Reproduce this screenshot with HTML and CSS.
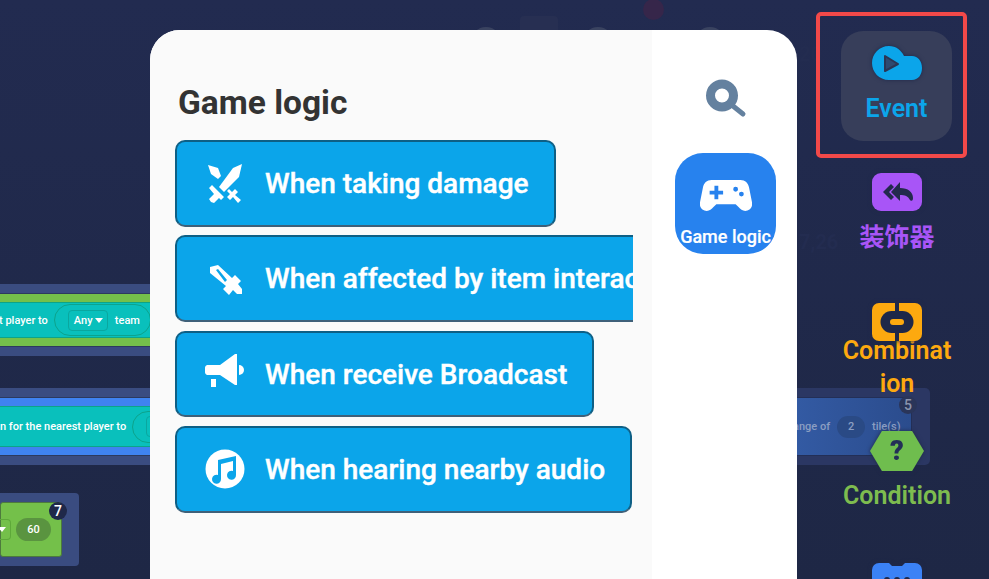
FILE: index.html
```html
<!DOCTYPE html>
<html lang="en">
<head>
  <meta charset="UTF-8">
  <title>Game logic blocks</title>
  <link rel="stylesheet" href="styles.css">
</head>
<body>
  <!-- Blocks on the canvas behind the panel -->
  <div class="canvas">
    <div class="stack stack-team">
      <div class="stack-band band-green">
        <div class="stack-row">
          <span>t player to</span>
          <span class="slot"><span class="select">Any <i class="caret"></i></span><span>team</span></span>
        </div>
      </div>
    </div>
    <div class="stack stack-nearest">
      <div class="stack-band band-blue">
        <div class="stack-row">
          <span>n for the nearest player to</span>
          <span class="slot"><span class="select"></span></span>
        </div>
      </div>
    </div>
    <div class="card card-seven">
      <div class="card-body">
        <span class="select mini"><i class="caret"></i></span>
        <span class="pill">60</span>
      </div>
      <span class="count">7</span>
    </div>
    <div class="card card-five">
      <div class="card-body">
        <span>ange of</span>
        <span class="pill">2</span>
        <span>tile(s)</span>
      </div>
      <span class="count">5</span>
    </div>
    <span class="top-tab tab-a"></span>
    <span class="top-tab tab-b"></span>
    <span class="top-tab tab-c"></span>
    <span class="top-square"></span>
    <span class="top-dot"></span>
    <span class="ghost ghost-top">20</span>
    <span class="ghost ghost-mid">7,26</span>
  </div>

  <!-- Block picker panel -->
  <section class="panel">
    <div class="panel-main">
      <h1>Game logic</h1>
      <div class="block-list">
        <button class="block">
          <svg class="block-icon" viewBox="0 0 40 40" fill="#fff">
            <path d="M3 2l10 3 3 8-3 3-7-5z"/>
            <path d="M37 1l-3 13-15 15-5-5L28 5z"/>
            <path d="M4 25l3-3 12 12-3 3-2-2-5 5-3-1-2-3 5-5z"/>
            <path d="M24 26l3 3 3-3 3 3-3 3 6 5-3 3-5-6-3 3-3-3 3-3-3-3z"/>
          </svg>
          <span>When taking damage</span>
        </button>
        <button class="block">
          <svg class="block-icon" viewBox="0 0 40 40" fill="#fff">
            <path fill-rule="evenodd" d="M5 8l8-2 14 13 3-3 6 6-3 3 4 5v5h-5l-4-4-4 5-6-6 3-3L5 14zM11 11l9 12 2-2-9-11z"/>
          </svg>
          <span>When affected by item interaction</span>
        </button>
        <button class="block">
          <svg class="block-icon" viewBox="0 0 40 40" fill="#fff">
            <path d="M2 11h13L30 0h2v31h-2L15 21H2a3 3 0 0 1-2-3v-4a3 3 0 0 1 2-3z"/>
            <path d="M34 11a5 5 0 0 1 0 10z"/>
            <path d="M6 25h5v8H6z"/>
          </svg>
          <span>When receive Broadcast</span>
        </button>
        <button class="block">
          <svg class="block-icon" viewBox="0 0 40 40">
            <circle cx="20" cy="20" r="19.500" fill="#fff"/>
            <path fill="#0ba5ea" d="M13 11l18-4v19a4.500 4.500 0 1 1-3-4V12l-12 3v15a4.500 4.500 0 1 1-3-4z"/>
          </svg>
          <span>When hearing nearby audio</span>
        </button>
      </div>
    </div>
    <aside class="panel-side">
      <svg class="search-icon" viewBox="0 0 42 42">
        <circle cx="17" cy="16.500" r="11.500" fill="none" stroke="#64819f" stroke-width="9"/>
        <path d="M28 27l10 8" stroke="#64819f" stroke-width="5" stroke-linecap="round"/>
      </svg>
      <div class="category">
        <svg class="pad-icon" viewBox="0 0 54 32" fill="#fff">
          <path fill-rule="evenodd" d="M12 0h30c5 0 8 3 9 8l3 15c1 6-3 9-7 9-3 0-5-2-7-4l-3-3H17l-3 3c-2 2-4 4-7 4-4 0-8-3-7-9L3 8c1-5 4-8 9-8zm3 6v5h-5v4h5v5h4v-5h5v-4h-5V6zm22 1a2.500 2.500 0 1 0 0 5 2.500 2.500 0 0 0 0-5zm6 5a2.500 2.500 0 1 0 0 5 2.500 2.500 0 0 0 0-5z"/>
        </svg>
        <span>Game logic</span>
      </div>
    </aside>
  </section>

  <!-- Toolbox rail -->
  <nav class="rail">
    <div class="rail-item rail-event">
      <div class="rail-active">
        <svg class="rail-icon" viewBox="0 0 50 34">
          <path fill="#0ba5ea" d="M17 0c7 0 12 4 15 10h8c6 0 10 5 10 12s-4 12-10 12H17C7 34 0 26 0 17S7 0 17 0z"/>
          <path fill="#2e4a70" stroke="#2b3554" stroke-width="2" stroke-linejoin="round" d="M13 10l13 8-13 7z"/>
        </svg>
        <span>Event</span>
      </div>
    </div>
    <div class="rail-item rail-decorator">
      <svg class="rail-icon rail-square" viewBox="0 0 50 38">
        <rect width="50" height="38" rx="9" fill="#a855f7"/>
        <path fill="#232a4d" d="M19 11l-8 8 8 8 3-3-5-5 5-5zM28 9l-9 10 9 9v-6c5 0 8 1 10 5 2 2 3 0 3-2 0-6-5-10-13-10z"/>
      </svg>
      <span>装饰器</span>
    </div>
    <div class="rail-item rail-combo">
      <svg class="rail-icon rail-square" viewBox="0 0 50 38">
        <rect width="50" height="38" rx="7" fill="#fda90f"/>
        <path fill="#1f2849" d="M23 0h4v9h-4zM23 29h4v9h-4z"/>
        <rect x="8.500" y="8" width="33" height="22" rx="11" fill="#1f2849"/>
        <rect x="18" y="16" width="14" height="6" rx="3" fill="#fda90f"/>
      </svg>
      <span>Combination</span>
    </div>
    <div class="rail-item rail-condition">
      <div class="hexagon-wrap"><div class="hexagon">?</div></div>
      <span>Condition</span>
    </div>
    <div class="rail-item rail-more">
      <svg class="rail-icon rail-square" viewBox="0 0 50 38">
        <path fill="#3b82f6" d="M7 0h10l3 3h10l3-3h10a7 7 0 0 1 7 7v31H0V7a7 7 0 0 1 7-7z"/>
        <circle cx="15" cy="17" r="3" fill="#1f2849"/>
        <circle cx="25" cy="17" r="3" fill="#1f2849"/>
        <circle cx="35" cy="17" r="3" fill="#1f2849"/>
      </svg>
    </div>
  </nav>
</body>
</html>
```

FILE: styles.css
```css
* {
  box-sizing: border-box;
}
html, body {
  height: 100%;
}
body {
  margin: 0;
  overflow: hidden;
  background: linear-gradient(180deg, #222b50, #1e2745);
  font-family: Roboto, "Noto Sans CJK SC", sans-serif;
  position: relative;
}

/* Canvas blocks */
.canvas {
  position: absolute;
  inset: 0;
}
.stack {
  position: absolute;
  left: 0;
  width: 160px;
  padding: 9px 0;
  background-color: #3a4c80;
}
.stack-team {
  top: 284px;
  height: 72px;
}
.stack-nearest {
  top: 388px;
  height: 77px;
}
.stack-band {
  padding: 8px 0;
  border-top: 1px solid #2c3a5e;
  border-bottom: 1px solid #2c3a5e;
}
.band-green {
  height: 54px;
  background-color: #74c04a;
}
.band-blue {
  height: 59px;
  background-color: #3f83f0;
}
.stack-row {
  height: 100%;
  display: flex;
  align-items: center;
  gap: 6px;
  background-color: #09c0bc;
  border-top: 1px solid #0da488;
  border-bottom: 1px solid #0da488;
  color: #fff;
  font-size: 11px;
  font-weight: 500;
  white-space: nowrap;
}
.stack-team .stack-row {
  margin-left: -1px;
}
.slot {
  display: flex;
  align-items: center;
  gap: 7px;
  height: 32px;
  padding: 0 10px 0 13px;
  flex: none;
  border: 1px solid #0ca38c;
  border-radius: 16px;
}
.select {
  display: inline-flex;
  align-items: center;
  justify-content: space-between;
  height: 21px;
  min-width: 40px;
  padding: 0 4px 0 5px;
  border: 1px solid #0aa79f;
  border-radius: 4px;
}
.select.mini {
  min-width: 17px;
  width: 17px;
  margin-left: -7px;
  justify-content: flex-end;
  border-color: #5ea83a;
  border-left: 0;
  border-radius: 0 4px 4px 0;
}
.caret {
  width: 0;
  height: 0;
  border-left: 4px solid transparent;
  border-right: 4px solid transparent;
  border-top: 5px solid #fff;
}
.card {
  position: absolute;
  background-color: #3a4c80;
  border-radius: 4px;
}
.card-seven {
  left: -9px;
  top: 493px;
  width: 88px;
  height: 73px;
  padding: 9px 17px 9px 9px;
}
.card-seven .card-body {
  height: 55px;
  gap: 5px;
  background-color: #74c04a;
  border: 1px solid #4d7a3d;
  border-radius: 3px;
  color: #fff;
}
.card-body {
  display: flex;
  align-items: center;
  font-size: 11px;
  font-weight: 500;
}
.pill {
  display: inline-flex;
  align-items: center;
  justify-content: center;
  width: 35px;
  height: 23px;
  border-radius: 12px;
  background-color: #5a9440;
}
.count {
  position: absolute;
  top: 9px;
  right: 12px;
  width: 18px;
  height: 18px;
  border-radius: 50%;
  background-color: #1f2849;
  color: #fff;
  font-size: 14px;
  font-weight: 500;
  line-height: 18px;
  text-align: center;
}
.card-five {
  left: 780px;
  top: 388px;
  width: 150px;
  height: 77px;
  padding: 9px 18px 9px 0;
  background-color: #2b3763;
  border-radius: 5px;
}
.card-five .card-body {
  height: 59px;
  padding-left: 12px;
  gap: 7px;
  background: linear-gradient(90deg, #345ca6, #2b4c8d);
  border: 1px solid #232f57;
  color: #8b9ec2;
}
.card-five .pill {
  width: 28px;
  height: 22px;
  background-color: #2a4a85;
}
.card-five .count {
  top: 8px;
  right: 13px;
  background-color: #2a3559;
  color: #8a93ac;
}
.top-tab {
  position: absolute;
  top: 27px;
  width: 30px;
  height: 30px;
  border-radius: 50%;
  background-color: #3a4360;
}
.tab-a {
  left: 471px;
}
.tab-b {
  left: 583px;
}
.tab-c {
  left: 695px;
}
.top-square {
  position: absolute;
  left: 520px;
  top: 16px;
  width: 38px;
  height: 30px;
  border-radius: 4px;
  background-color: #272f52;
}
.top-dot {
  position: absolute;
  left: 643px;
  top: -1px;
  width: 21px;
  height: 21px;
  border-radius: 50%;
  background-color: #36264a;
}
.ghost {
  position: absolute;
  left: 799px;
  color: #232c50;
  font-size: 20px;
  font-weight: 700;
}
.ghost-top {
  top: 42px;
}
.ghost-mid {
  top: 230px;
}

/* Picker panel */
.panel {
  position: absolute;
  left: 150px;
  top: 30px;
  width: 647px;
  height: 549px;
  display: flex;
  overflow: hidden;
  background-color: #fff;
  border-radius: 30px 30px 0 0;
}
.panel-main {
  width: 502px;
  padding: 47px 19px 0 25px;
  background-color: #fafafa;
}
h1 {
  margin: 0 0 11px 3px;
  font-size: 33.500px;
  line-height: 52px;
  font-weight: 700;
  color: #333;
}
.block-list {
  display: flex;
  flex-direction: column;
  align-items: flex-start;
  gap: 8.800px;
  width: 458px;
  overflow: hidden;
}
.block {
  display: inline-flex;
  align-items: center;
  gap: 20px;
  height: 86.600px;
  padding: 0 25px 0 28px;
  flex: none;
  border: 2px solid #0e5f85;
  border-bottom-color: #3f6079;
  border-radius: 10px;
  background-color: #0ba5ea;
  color: #fff;
  font-family: inherit;
  font-size: 28px;
  font-weight: 500;
  -webkit-text-stroke: 0.4px #fff;
  white-space: nowrap;
}
.block-icon {
  width: 40px;
  height: 40px;
  flex: none;
}
.panel-side {
  flex: 1;
  display: flex;
  flex-direction: column;
  align-items: center;
  padding-top: 49px;
}
.search-icon {
  width: 42px;
  height: 42px;
  margin-left: 3px;
}
.category {
  width: 101px;
  height: 101px;
  margin-top: 32px;
  margin-left: 2px;
  padding-top: 27px;
  display: flex;
  flex-direction: column;
  align-items: center;
  overflow: hidden;
  border-radius: 28px;
  background-color: #2782ee;
  color: #fff;
  font-size: 18px;
  font-weight: 500;
  -webkit-text-stroke: 0.2px #fff;
  white-space: nowrap;
}
.pad-icon {
  width: 52px;
  height: 31px;
  margin-bottom: 15px;
}

/* Toolbox rail */
.rail {
  position: absolute;
  left: 816px;
  top: 12px;
  width: 162px;
  display: flex;
  flex-direction: column;
  align-items: center;
  font-size: 25px;
  font-weight: 600;
}
.rail-item {
  width: 111px;
  display: flex;
  flex-direction: column;
  align-items: center;
  text-align: center;
}
.rail-event {
  align-self: flex-start;
  width: 151px;
  height: 146px;
  padding: 15px 0 0 21px;
  align-items: flex-start;
  border: 4px solid #f24949;
  border-radius: 5px;
  margin-bottom: 15px;
}
.rail-active {
  width: 111px;
  height: 110px;
  padding-top: 15px;
  display: flex;
  flex-direction: column;
  align-items: center;
  border-radius: 22px;
  background-color: #373e5a;
  color: #0ba5ea;
}
.rail-active .rail-icon {
  width: 50px;
  height: 34px;
  margin-bottom: 14px;
}
.rail-icon {
  flex: none;
  filter: drop-shadow(0 0 2px #1f2849);
}
.rail-square {
  width: 50px;
  height: 38px;
}
.rail-decorator {
  color: #a855f7;
  height: 130px;
  gap: 6px;
}
.rail-combo {
  color: #fda90f;
  height: 128px;
  line-height: 33px;
  word-break: break-all;
}
.rail-combo span {
  margin-top: -7px;
}
.rail-condition {
  color: #7ebc4f;
  height: 132px;
  gap: 10px;
}
.hexagon-wrap {
  filter: drop-shadow(0 0 2px #1f2849);
}
.hexagon {
  width: 54px;
  height: 40px;
  clip-path: polygon(22% 0, 78% 0, 100% 50%, 78% 100%, 22% 100%, 0 50%);
  background-color: #6fbd4e;
  color: #232f57;
  font-size: 27px;
  font-weight: 900;
  line-height: 40px;
}
```
